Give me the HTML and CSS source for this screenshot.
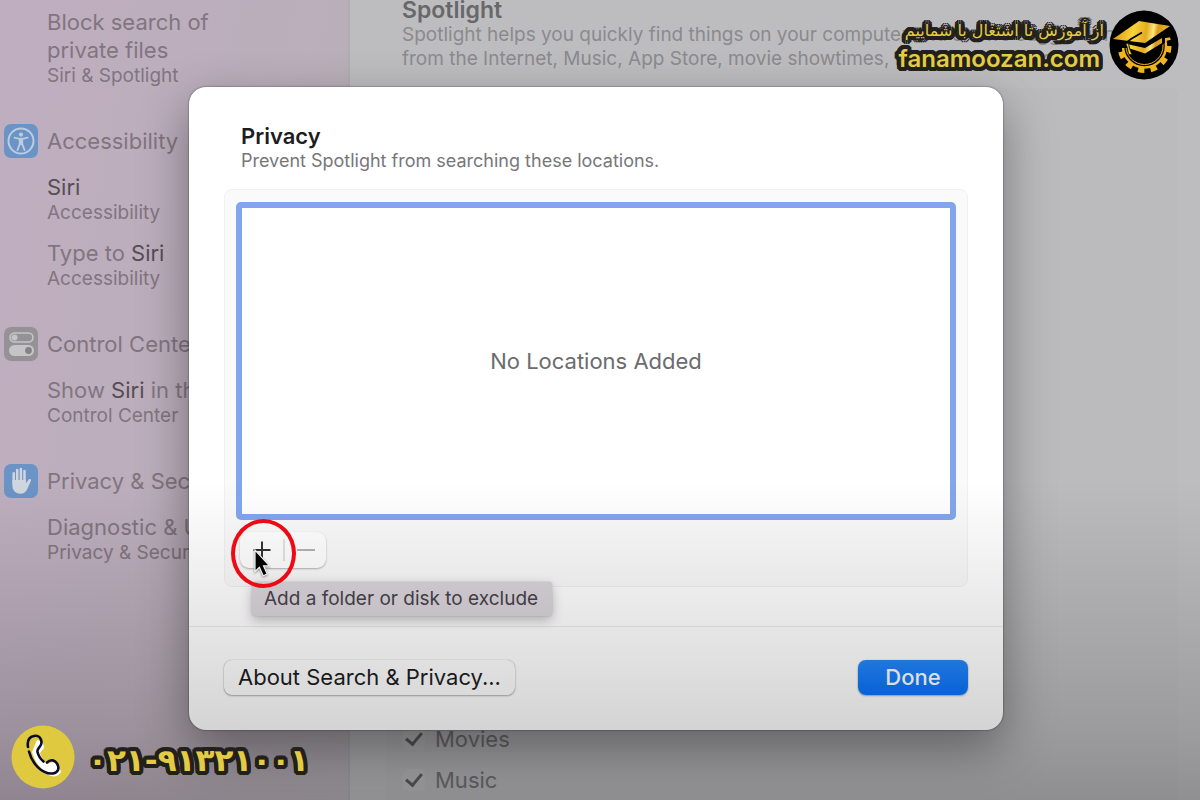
FILE: index.html
```html
<!DOCTYPE html>
<html lang="en">
<head>
<meta charset="utf-8">
<title>Spotlight Privacy</title>
<link rel="stylesheet" href="styles.css">
</head>
<body>
<div class="scene">
  <div class="settings">
    <nav class="sidebar" aria-label="Search results">
      <ul class="results">
        <li class="result">
          <span class="result-title">Block search of<br>private files</span>
          <span class="result-sub">Siri &amp; Spotlight</span>
        </li>
      </ul>
      <h2 class="group">
        <svg class="group-icon" viewBox="0 0 36 36" aria-hidden="true">
          <rect x="1" y="1" width="34" height="34" rx="7" fill="#6b93c6"/>
          <circle cx="18" cy="18" r="12.5" fill="none" stroke="#bccddd" stroke-width="2"/>
          <circle cx="18" cy="11.6" r="2.1" fill="#bccddd"/>
          <path d="M11.5 14.6l5 1.2h3l5-1.2M16.8 16v5l-2.3 6M19.2 16v5l2.3 6M18 16v5" fill="none" stroke="#bccddd" stroke-width="1.9" stroke-linecap="round" stroke-linejoin="round"/>
        </svg>
        Accessibility
      </h2>
      <ul class="results">
        <li class="result">
          <span class="result-title"><b>Siri</b></span>
          <span class="result-sub">Accessibility</span>
        </li>
        <li class="result">
          <span class="result-title">Type to <b>Siri</b></span>
          <span class="result-sub">Accessibility</span>
        </li>
      </ul>
      <h2 class="group">
        <svg class="group-icon" viewBox="0 0 36 36" aria-hidden="true">
          <rect x="1" y="1" width="34" height="34" rx="7" fill="#959297"/>
          <rect x="7" y="7" width="23" height="9" rx="4.5" fill="none" stroke="#c6c4c7" stroke-width="1.6"/>
          <circle cx="11.5" cy="11.5" r="3" fill="#c6c4c7"/>
          <rect x="6" y="19" width="25" height="11" rx="5.5" fill="#c6c4c7"/>
          <circle cx="25.5" cy="24.5" r="3.4" fill="#858287"/>
        </svg>
        Control Center
      </h2>
      <ul class="results">
        <li class="result">
          <span class="result-title">Show <b>Siri</b> in the menu bar</span>
          <span class="result-sub">Control Center</span>
        </li>
      </ul>
      <h2 class="group">
        <svg class="group-icon" viewBox="0 0 36 36" aria-hidden="true">
          <rect x="1" y="1" width="34" height="34" rx="7" fill="#6b93c6"/>
          <path d="M10.700 21V10.200M14.200 19V7M17.900 19V6M21.500 19V8" stroke="#d0d6de" stroke-width="2.500" stroke-linecap="round"/>
          <path d="M9.400 17h13.400v3.600l2.700-3.800c1-1.300 3-.6 2.400 1l-3.600 8.200c-1.300 3-3.500 4.700-6.900 4.700-5.300 0-8-3.300-8-8.700z" fill="#d0d6de"/>
        </svg>
        Privacy &amp; Security
      </h2>
      <ul class="results">
        <li class="result">
          <span class="result-title">Diagnostic &amp; Usage</span>
          <span class="result-sub">Privacy &amp; Security</span>
        </li>
      </ul>
    </nav>
    <main class="content">
      <h1 class="content-title">Spotlight</h1>
      <p class="content-text">Spotlight helps you quickly find things on your computer and shows suggestions<br>from the Internet, Music, App Store, movie showtimes, locations, and more.</p>
      <div class="categories">
        <label class="category"><input type="checkbox" class="check" checked>Movies</label>
        <label class="category"><input type="checkbox" class="check" checked>Music</label>
      </div>
    </main>
  </div>

  <div class="sheet-layer">
    <section class="sheet" role="dialog" aria-labelledby="sheet-title">
      <div class="sheet-body">
        <h2 class="sheet-title" id="sheet-title">Privacy</h2>
        <p class="sheet-sub">Prevent Spotlight from searching these locations.</p>
        <div class="box">
          <div class="locations" tabindex="0">No Locations Added</div>
          <div class="segment">
            <button class="seg" type="button" aria-label="Add">
              <svg viewBox="0 0 20 20" width="20" height="20"><path d="M10 1.500v17M1.500 10h17" stroke="#333" stroke-width="2"/></svg>
            </button>
            <button class="seg seg-off" type="button" aria-label="Remove">
              <svg viewBox="0 0 20 20" width="20" height="20"><path d="M1 10h18" stroke="#b4b4b4" stroke-width="2"/></svg>
            </button>
            <div class="tooltip" role="tooltip">Add a folder or disk to exclude</div>
            <svg class="cursor" viewBox="0 0 18 30" aria-hidden="true"><path d="M2 2v21.500l4.400-4.200 3.800 8.500 4-1.800-3.700-8.200h6z" fill="#000" stroke="#fff" stroke-width="1.200"/></svg>
          </div>
        </div>
      </div>
      <footer class="sheet-footer">
        <button class="btn" type="button">About Search &amp; Privacy...</button>
        <button class="btn btn-primary" type="button">Done</button>
      </footer>
    </section>
  </div>

  <div class="shade"></div>
  <div class="ring"></div>

  <div class="brand">
    <div class="brand-text">
      <span class="brand-slogan" lang="fa" dir="rtl">از آموزش تا اشتغال با شماییم</span>
      <a class="brand-link" href="#">fanamoozan.com</a>
    </div>
    <svg class="brand-logo" viewBox="0 0 70 70" role="img" aria-label="Fanamoozan">
      <defs>
        <linearGradient id="gold" gradientUnits="userSpaceOnUse" x1="8" y1="22" x2="60" y2="30">
          <stop offset="0" stop-color="#e0a318"/><stop offset=".3" stop-color="#f8d43a"/>
          <stop offset=".55" stop-color="#e3ab20"/><stop offset=".68" stop-color="#fbe680"/>
          <stop offset=".76" stop-color="#d9991a"/><stop offset="1" stop-color="#edbc30"/>
        </linearGradient>
        <clipPath id="gear"><path d="M0 38h20l30-9 20-3v44H0z"/></clipPath>
      </defs>
      <circle cx="35" cy="35" r="34.500" fill="#000"/>
      <g fill="none" stroke="#f0b51e" clip-path="url(#gear)">
        <circle cx="35.500" cy="36" r="21.500" stroke-width="2.500"/>
        <circle cx="35.500" cy="36" r="24.500" stroke-width="5" stroke-dasharray="6.400 6.400"/>
        <circle cx="35.500" cy="36" r="18.500" stroke-width="1"/>
      </g>
      <path d="M16 33l20 3 20-12v9L36 46 20 39z" fill="#000"/>
      <path d="M20 34.500l16 3.500 17-10v5L36 43.500l-15-5z" fill="url(#gold)"/>
      <path d="M4 29l26-18 31 5-25 17z" fill="url(#gold)"/>
      <path d="M33 22.500L22 29l-4.500 3.500" fill="none" stroke="#000" stroke-width="1.600"/>
      <path d="M17 33.500h2.500l.5 4 3 7.500-2.500-1-.5 2-1.500-8z" fill="#f8d43a" stroke="#000" stroke-width=".5"/>
    </svg>
  </div>

  <div class="phone">
    <svg class="phone-icon" viewBox="0 0 64 64" aria-hidden="true">
      <circle cx="32" cy="32" r="31.500" fill="#dfca3f"/>
      <path d="M26 15c5 0 7 4 7 8l-4 5c1 4 4 8 7 11l6-2c4 1 7 5 8 10-2 4-7 6-12 3-8-5-14-13-17-23z" fill="#fff"/>
      <path d="M17 22c-1-6 1-10 6-11 5-1 7 2 7.500 6 .5 5-5 6-4 10 1 4 3 7 6 9.500M36 37.500c4-4 8-2 10 1 3 5 1 9-4 10-11 1-21-10-24-22" fill="none" stroke="#0c0c2a" stroke-width="2.600" stroke-linecap="round"/>
    </svg>
    <a class="phone-number" lang="fa" href="tel:02191321001">۰۲۱-۹۱۳۲۱۰۰۱</a>
  </div>
</div>
</body>
</html>
```

FILE: styles.css
```css
* { box-sizing: border-box; }
body {
  margin: 0;
  font-family: Inter, "Liberation Sans", sans-serif;
  color: #1d1d1f;
}
h1, h2, p, ul { margin: 0; padding: 0; font-weight: 400; }
ul { list-style: none; }
button { font: inherit; }
a { text-decoration: none; }

.scene { position: relative; height: 100vh; overflow: hidden; }
.settings { display: flex; height: 100%; }

.sidebar {
  flex: 0 0 350px;
  padding: 8px 4px;
  background: linear-gradient(100deg, #bfaec0 0%, #bcaebc 45%, #b6b0b6 100%);
  border-right: 2px solid #b1adb2;
  color: #82757f;
  white-space: nowrap;
}
.results { display: flex; flex-direction: column; gap: 14px; padding-left: 43px; }
.result-title, .result-sub { display: block; }
.result-title { font-size: 22px; line-height: 28px; }
.result-title b { font-weight: 400; color: #574d55; }
.result-sub { font-size: 19px; line-height: 24px; }
.group {
  display: flex;
  align-items: center;
  gap: 8px;
  height: 36px;
  margin: 35px 0 14px;
  margin-left: -1px;
  font-size: 22px;
}
.group-icon { width: 36px; height: 36px; }

.content {
  flex: 1;
  min-width: 0;
  display: flex;
  flex-direction: column;
  padding: 0 22px 0 36px;
  background: #bdbdc0;
  color: #8b8a8d;
}
.content-title { padding-left: 16px; font-size: 23px; line-height: 20px; font-weight: 600; color: #68676a; }
.content-text { padding: 3px 0 0 16px; font-size: 19px; line-height: 24px; white-space: nowrap; }
.categories {
  flex: 1;
  display: flex;
  flex-direction: column;
  justify-content: flex-end;
  margin-top: 17px;
  background: #bbbabd;
  border-radius: 8px 8px 0 0;
}
.category {
  display: flex;
  align-items: center;
  gap: 10px;
  height: 41px;
  padding-left: 17px;
  font-size: 22px;
  color: #747375;
}
.check {
  appearance: none;
  width: 22px;
  height: 22px;
  margin: 0;
  border-radius: 5px;
  background: #bfbfc1;
  display: grid;
  place-items: center;
}
.check::after {
  content: "";
  width: 7px;
  height: 13px;
  margin-bottom: 3px;
  border: solid #606062;
  border-width: 0 3px 3px 0;
  transform: rotate(40deg);
}

.sheet-layer { position: absolute; inset: 0; padding: 87px 197px 0 189px; }
.sheet {
  background: #fff;
  border-radius: 17px;
  box-shadow: 0 0 2px rgba(0, 0, 0, .6), 0 18px 50px rgba(0, 0, 0, .38);
}
.sheet-body { padding: 35px 35px 39px; }
.sheet-title { padding-left: 17px; font-size: 22px; line-height: 28px; font-weight: 600; }
.sheet-sub { padding-left: 17px; font-size: 18px; line-height: 22px; color: #77777a; }
.box {
  margin-top: 17px;
  padding: 12px 11px 18px;
  background: #fafafa;
  border: 1px solid #f1f1f1;
  border-radius: 8px;
}
.locations {
  display: grid;
  place-items: center;
  height: 318px;
  border: 6px solid #82a6ed;
  border-radius: 5px;
  background: #fff;
  font-size: 22px;
  color: #6c6c6e;
  outline: none;
}
.segment {
  position: relative;
  display: inline-flex;
  align-items: center;
  height: 36px;
  margin: 12px 0 0 4px;
  border-radius: 9px;
  background: #fff;
  box-shadow: 0 1px 2px rgba(0, 0, 0, .3);
  vertical-align: top;
}
.seg {
  display: grid;
  place-items: center;
  width: 43px;
  height: 22px;
  padding: 0;
  border: 0;
  background: none;
}
.seg-off { border-left: 2px solid #e2e2e2; }
.tooltip {
  position: absolute;
  top: 50px;
  left: 12px;
  padding: 0 14px 0 12px;
  font-size: 19px;
  line-height: 34px;
  white-space: nowrap;
  color: #48424a;
  background: #dad4db;
  border-radius: 3px;
  box-shadow: 0 4px 12px rgba(0, 0, 0, .25), 0 0 2px rgba(0, 0, 0, .2);
}
.cursor {
  position: absolute;
  top: 16px;
  left: 13px;
  width: 18px;
  height: 30px;
  filter: drop-shadow(0 1px 1px rgba(0, 0, 0, .4));
}
.sheet-footer {
  display: flex;
  justify-content: space-between;
  padding: 33px 35px 35px;
  border-top: 1px solid #ececec;
}
.btn {
  height: 35px;
  padding: 0 14px;
  border: 0;
  border-radius: 8px;
  background: #fff;
  box-shadow: 0 0 1px rgba(0, 0, 0, .35), 0 1px 2px rgba(0, 0, 0, .3);
  font-size: 22px;
  line-height: 33px;
  color: #1d1d1f;
}
.btn-primary {
  min-width: 110px;
  background: linear-gradient(#2487fb, #0873fa);
  color: #fff;
  font-weight: 500;
}

.shade {
  position: absolute;
  inset: 60% 0 0;
  background: linear-gradient(rgba(0, 0, 0, 0), rgba(0, 0, 0, .09) 42%, rgba(0, 0, 0, .17) 78%, rgba(0, 0, 0, .24));
  pointer-events: none;
}
.ring {
  position: absolute;
  top: 519px;
  left: 231px;
  width: 65px;
  height: 69px;
  border: 4px solid #ee0a14;
  border-radius: 50%;
  pointer-events: none;
}

.brand {
  position: absolute;
  top: 10px;
  right: 21px;
  display: flex;
  align-items: center;
  gap: 5px;
}
.brand-text { display: flex; flex-direction: column; align-items: flex-end; }
.brand-slogan, .brand-link, .phone-number {
  color: #e3cb45;
  font-weight: 700;
  text-shadow:
    4px 0 #22201c, -4px 0 #22201c, 0 4px #22201c, 0 -4px #22201c,
    3px 3px #22201c, -3px 3px #22201c, 3px -3px #22201c, -3px -3px #22201c,
    4px 2px #22201c, -4px 2px #22201c, 4px -2px #22201c, -4px -2px #22201c,
    2px 4px #22201c, -2px 4px #22201c, 2px -4px #22201c, -2px -4px #22201c,
    2px 0 #22201c, -2px 0 #22201c, 0 2px #22201c, 0 -2px #22201c;
  white-space: nowrap;
}
.brand-slogan { font-family: "DejaVu Sans", sans-serif; font-size: 16px; line-height: 28px; font-weight: 400; }
.brand-link { font-size: 24px; line-height: 28px; font-weight: 600; padding-right: 4px; }
.brand-logo { width: 70px; height: 70px; }

.phone {
  position: absolute;
  left: 11px;
  bottom: 11px;
  display: flex;
  align-items: center;
  gap: 13px;
}
.phone-icon { width: 64px; height: 64px; }
.phone-number { padding-top: 5px; font-family: "DejaVu Sans", sans-serif; font-size: 31px; line-height: 40px; direction: ltr; unicode-bidi: bidi-override; }
```
